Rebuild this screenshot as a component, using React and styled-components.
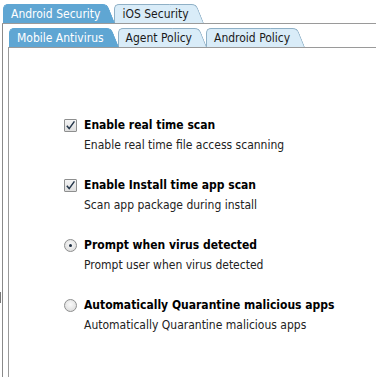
import React from "react";
import styled, { createGlobalStyle } from "styled-components";

const GlobalStyle = createGlobalStyle`
  html, body {
    margin: 0;
    padding: 0;
    background: #fff;
  }
  body {
    font-family: "DejaVu Sans Condensed", "DejaVu Sans", sans-serif;
    font-size: 12px;
    color: #000;
  }
`;

const options = [
  { type: "checkbox", checked: true, title: "Enable real time scan", desc: "Enable real time file access scanning" },
  { type: "checkbox", checked: true, title: "Enable Install time app scan", desc: "Scan app package during install" },
  { type: "radio", checked: true, title: "Prompt when virus detected", desc: "Prompt user when virus detected" },
  { type: "radio", checked: false, title: "Automatically Quarantine malicious apps", desc: "Automatically Quarantine malicious apps" },
];

function App() {
  return (
    <>
      <GlobalStyle />
      <Page>
        <Splitter />
        <Outer>
          <TabStrip>
            <Tab $active $z={5}>Android Security</Tab>
            <Tab $z={4}>iOS Security</Tab>
          </TabStrip>
          <Panel>
            <TabStrip>
              <Tab $active $z={5}>Mobile Antivirus</Tab>
              <Tab $z={4}>Agent Policy</Tab>
              <Tab $z={3}>Android Policy</Tab>
            </TabStrip>
            <Inner>
              {options.map((opt, i) => (
                <Option key={i}>
                  <Label>
                    {opt.type === "checkbox" ? (
                      <CheckBox>
                        {opt.checked && (
                          <svg width="11" height="11" viewBox="0 0 11 11">
                            <path d="M1.8 5.8 L4.2 8.6 L9.4 1.4" fill="none" stroke="#24364a" strokeWidth="1.5" />
                          </svg>
                        )}
                      </CheckBox>
                    ) : (
                      <Radio $checked={opt.checked} />
                    )}
                    <Title>{opt.title}</Title>
                  </Label>
                  <Desc>{opt.desc}</Desc>
                </Option>
              ))}
            </Inner>
          </Panel>
        </Outer>
      </Page>
    </>
  );
}

export default App;

const Page = styled.div`
  display: flex;
  height: 377px;
  padding-top: 4px;
  box-sizing: border-box;
  overflow: hidden;
`;

const Splitter = styled.div`
  position: relative;
  width: 2px;
  flex: none;

  &::after {
    content: "";
    position: absolute;
    left: 0;
    top: 288px;
    width: 1px;
    height: 11px;
    background: #777;
  }
`;

const Outer = styled.div`
  flex: 1;
  display: flex;
  flex-direction: column;
  min-width: 0;
`;

const TabStrip = styled.div`
  display: flex;
  align-items: flex-end;
  padding-left: 1px;
  border-bottom: 1px solid #9a9a9a;
  flex: none;
`;

const Tab = styled.div`
  position: relative;
  z-index: ${({ $active, $z }) => ($active ? 10 : $z)};
  height: 19px;
  line-height: 20px;
  padding: 0 15px 0 8px;
  margin-right: -1px;
  font-size: 12px;
  white-space: nowrap;
  color: ${({ $active }) => ($active ? "#fff" : "#1a1a1a")};

  &::before,
  &::after {
    content: "";
    position: absolute;
    top: 0;
    bottom: 0;
    z-index: -1;
    background: ${({ $active }) => ($active ? "#5fa6d3" : "#d9ecf8")};
    border: 1px solid ${({ $active }) => ($active ? "#5fa6d3" : "#8fb0c6")};
    border-bottom: none;
  }

  &::before {
    left: 0;
    right: 12px;
    border-right: none;
    border-top-left-radius: 5px;
  }

  &::after {
    right: 0;
    width: 26px;
    border-left: none;
    border-top-right-radius: 5px;
    transform: skewX(22deg);
    transform-origin: bottom right;
  }
`;

const Panel = styled.div`
  flex: 1;
  display: flex;
  flex-direction: column;
  border-left: 1px solid #8a8a8a;
  padding: 4px 0 0 5px;
`;

const Inner = styled.div`
  flex: 1;
  border-left: 1px solid #9a9a9a;
  padding: 67px 0 0 55px;
`;

const Option = styled.div`
  margin-bottom: 20px;
`;

const Label = styled.label`
  display: flex;
  align-items: center;
  gap: 7px;
  height: 20px;
`;

const CheckBox = styled.span`
  width: 11px;
  height: 11px;
  border: 1px solid #8e8f8f;
  border-radius: 1px;
  background: linear-gradient(#f4f4f4, #dedede);
  display: flex;
  align-items: center;
  justify-content: center;
  flex: none;
`;

const Radio = styled.span`
  width: 11px;
  height: 11px;
  border: 1px solid #8e8f8f;
  border-radius: 50%;
  background: radial-gradient(circle at 50% 40%, #fafafa, #d6d6d6);
  flex: none;
  display: flex;
  align-items: center;
  justify-content: center;

  &::after {
    content: "";
    width: 3px;
    height: 3px;
    border-radius: 50%;
    background: ${({ $checked }) => ($checked ? "#1e2e40" : "transparent")};
  }
`;

const Title = styled.span`
  font-weight: bold;
`;

const Desc = styled.div`
  padding-left: 20px;
  line-height: 20px;
  color: #222;
`;
